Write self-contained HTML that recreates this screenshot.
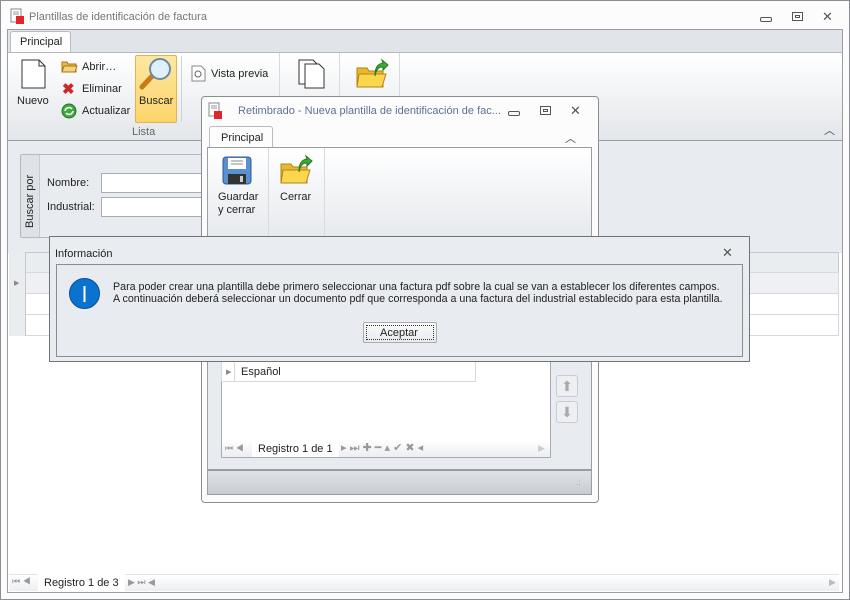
<!DOCTYPE html>
<html><head><meta charset="utf-8"><style>
*{margin:0;padding:0;box-sizing:border-box}
body{width:850px;height:600px;position:relative;overflow:hidden;background:#fff;font-family:"Liberation Sans",sans-serif;font-size:11px;color:#222}
.a{position:absolute}
.t{position:absolute;white-space:nowrap}
.btnc{position:absolute;font-size:13px;color:#555}
</style></head><body>
<!-- main window -->
<div class="a" style="left:0;top:0;width:850px;height:600px;border:1px solid #8a8e94;background:#fcfcfc"></div>
<svg class="a" style="left:10px;top:8px" width="14" height="16"><rect x="1" y="1" width="10" height="13" fill="#fff" stroke="#888"/><line x1="3" y1="4" x2="9" y2="4" stroke="#999"/><line x1="3" y1="6" x2="9" y2="6" stroke="#999"/><rect x="6" y="8" width="8" height="8" fill="#e0262a"/></svg>
<div class="t" style="left:29px;top:11px;font-size:11px;color:#777">Plantillas de identificación de factura</div>
<div class="a" style="left:760px;top:17px;width:12px;height:5px;border:1px solid #555;border-radius:2px"></div>
<div class="a" style="left:792px;top:12px;width:11px;height:9px;border:1px solid #555"></div><div class="a" style="left:795px;top:15px;width:5px;height:3px;border:1px solid #555"></div>
<div class="btnc" style="left:822px;top:9px">✕</div>
<!-- tab strip -->
<div class="a" style="left:7px;top:29px;width:836px;height:24px;background:#e1e4e8;border:1px solid #9a9ea4;border-bottom:none"></div>
<div class="a" style="left:10px;top:31px;width:61px;height:22px;background:#fdfdfd;border:1px solid #b8bcc2;border-bottom:none;border-radius:3px 3px 0 0"></div>
<div class="t" style="left:20px;top:36px;font-size:11px">Principal</div>
<!-- ribbon -->
<div class="a" style="left:7px;top:52px;width:836px;height:89px;background:linear-gradient(#fff,#e3e6ea);border:1px solid #9a9ea4;border-top:1px solid #b5b9bf"></div>
<svg class="a" style="left:21px;top:59px" width="26" height="30"><path d="M1 1h17l6 6v22H1z" fill="#fff" stroke="#333"/><path d="M18 1v6h6" fill="none" stroke="#333"/></svg>
<div class="t" style="left:17px;top:95px;font-size:11px">Nuevo</div>
<svg class="a" style="left:61px;top:60px" width="17" height="13"><path d="M1 2h5l1 2h8v8H1z" fill="#e9b84a" stroke="#a7761a"/><path d="M3 6h13l-2 6H1z" fill="#f6d37a" stroke="#a7761a"/></svg>
<div class="t" style="left:82px;top:61px;font-size:11px">Abrir…</div>
<div class="t" style="left:62px;top:80px;font-size:15px;color:#d0262a;font-weight:bold">✖</div>
<div class="t" style="left:82px;top:83px;font-size:11px">Eliminar</div>
<svg class="a" style="left:61px;top:103px" width="16" height="16"><circle cx="8" cy="8" r="7" fill="#3caa3c" stroke="#1f7a1f"/><path d="M4 8a4 4 0 0 1 7-2M12 8a4 4 0 0 1-7 2" stroke="#fff" stroke-width="1.6" fill="none"/></svg>
<div class="t" style="left:82px;top:105px;font-size:11px">Actualizar</div>
<div class="a" style="left:135px;top:55px;width:42px;height:68px;background:linear-gradient(#fde7a0,#fbd56a);border:1px solid #e0b44e;border-radius:2px"></div>
<svg class="a" style="left:137px;top:57px" width="36" height="34"><line x1="5" y1="30" x2="17" y2="17" stroke="#c77a1a" stroke-width="5" stroke-linecap="round"/><circle cx="23" cy="12" r="10" fill="#dff0fb" stroke="#6a8aa6" stroke-width="2"/></svg>
<div class="t" style="left:139px;top:95px;font-size:11px">Buscar</div>
<div class="a" style="left:181px;top:56px;width:1px;height:66px;background:#d0d3d8"></div>
<svg class="a" style="left:190px;top:65px" width="16" height="17"><path d="M2 1h9l4 4v11H2z" fill="#fff" stroke="#888"/><circle cx="8" cy="9" r="3" fill="none" stroke="#666"/></svg>
<div class="t" style="left:211px;top:68px;font-size:11px">Vista previa</div>
<div class="a" style="left:279px;top:53px;width:1px;height:45px;background:#d8dade"></div>
<div class="a" style="left:339px;top:53px;width:1px;height:45px;background:#d8dade"></div>
<div class="a" style="left:399px;top:53px;width:1px;height:45px;background:#d8dade"></div>
<svg class="a" style="left:298px;top:59px" width="28" height="30"><path d="M1 1h14l4 4v20H1z" fill="#fff" stroke="#333"/><path d="M7 5h14l5 5v19H7z" fill="#fff" stroke="#333"/></svg>
<svg class="a" style="left:355px;top:58px" width="34" height="32"><path d="M2 10h10l2 3h14v16H2z" fill="#e9b82e" stroke="#b28414"/><path d="M4 16h27l-4 13H2z" fill="#fbd74e" stroke="#b28414"/><path d="M20 18c0-8 2-12 8-13l-1-3 6 5-5 5v-3c-5 0-7 3-8 9z" fill="#3fa93a" stroke="#1e7a1e"/></svg>
<div class="t" style="left:132px;top:126px;font-size:11px;color:#666">Lista</div>
<div class="t" style="left:824px;top:122px;font-size:11px;color:#444">︿</div>
<!-- content -->
<div class="a" style="left:7px;top:141px;width:836px;height:112px;background:#e8ebef;border-left:1px solid #9a9ea4;border-right:1px solid #9a9ea4"></div>
<div class="a" style="left:20px;top:154px;width:190px;height:84px;border:1px solid #b6bac0;background:#e8ebef;border-radius:2px"></div>
<div class="a" style="left:21px;top:155px;width:19px;height:82px;background:#dfe2e6;border-right:1px solid #c8ccd2"></div>
<div class="t" style="left:24px;top:228px;font-size:11px;transform:rotate(-90deg);transform-origin:0 0">Buscar por</div>
<div class="t" style="left:47px;top:177px;font-size:11px">Nombre:</div>
<div class="t" style="left:47px;top:201px;font-size:11px">Industrial:</div>
<div class="a" style="left:101px;top:173px;width:110px;height:20px;background:#fff;border:1px solid #a8acb2"></div>
<div class="a" style="left:101px;top:197px;width:110px;height:20px;background:#fff;border:1px solid #a8acb2"></div>
<!-- grid -->
<div class="a" style="left:7px;top:253px;width:836px;height:340px;background:#fff;border:1px solid #9a9ea4;border-top:none"></div>
<div class="a" style="left:9px;top:252px;width:830px;height:21px;background:#eaedf0;border:1px solid #c5c9ce"></div>
<div class="a" style="left:9px;top:272px;width:830px;height:22px;background:#eef0f3;border:1px solid #d5d8dc"></div>
<div class="a" style="left:9px;top:293px;width:830px;height:22px;border:1px solid #d5d8dc"></div>
<div class="a" style="left:9px;top:314px;width:830px;height:22px;border:1px solid #d5d8dc"></div>
<div class="a" style="left:9px;top:252px;width:17px;height:84px;border-right:1px solid #c5c9ce;background:#eaedf0"></div>
<div class="t" style="left:14px;top:279px;font-size:7px;color:#888">▶</div>
<div class="a" style="left:9px;top:574px;width:830px;height:17px;background:linear-gradient(#fff,#eceef1);border-top:1px solid #e2e4e7"></div>
<div class="t" style="left:12px;top:576px;font-size:9px;color:#999">⏮ ◀</div>
<div class="a" style="left:38px;top:574px;width:87px;height:17px;background:#fff"></div>
<div class="t" style="left:44px;top:577px;font-size:11px">Registro 1 de 3</div>
<div class="t" style="left:128px;top:577px;font-size:9px;color:#999">▶ ⏭ ◀</div>
<div class="t" style="left:829px;top:577px;font-size:9px;color:#bbb">▶</div>
<!-- child window -->
<div class="a" style="left:201px;top:96px;width:398px;height:407px;background:#fcfcfc;border:1px solid #8a8e94;border-radius:4px"></div>
<svg class="a" style="left:208px;top:102px" width="14" height="17"><rect x="1" y="1" width="10" height="13" fill="#fff" stroke="#888"/><line x1="3" y1="4" x2="9" y2="4" stroke="#999"/><line x1="3" y1="6" x2="9" y2="6" stroke="#999"/><rect x="6" y="9" width="8" height="8" fill="#e0262a"/></svg>
<div class="t" style="left:238px;top:105px;font-size:11px;color:#5f6f96">Retimbrado - Nueva plantilla de identificación de fac...</div>
<div class="a" style="left:508px;top:111px;width:12px;height:5px;border:1px solid #555;border-radius:2px"></div>
<div class="a" style="left:540px;top:106px;width:11px;height:9px;border:1px solid #555"></div><div class="a" style="left:543px;top:109px;width:5px;height:3px;border:1px solid #555"></div>
<div class="btnc" style="left:570px;top:103px">✕</div>
<div class="a" style="left:209px;top:126px;width:64px;height:23px;background:#fdfdfd;border:1px solid #b8bcc2;border-bottom:none;border-radius:3px 3px 0 0"></div>
<div class="t" style="left:221px;top:132px;font-size:11px">Principal</div>
<div class="t" style="left:565px;top:130px;font-size:11px;color:#444">︿</div>
<div class="a" style="left:207px;top:147px;width:385px;height:323px;background:linear-gradient(#fff 0,#e6e9ed 90px,#e8ebef 90px);border:1px solid #9a9ea4"></div>
<div class="a" style="left:268px;top:148px;width:1px;height:88px;background:#d8dade"></div>
<div class="a" style="left:324px;top:148px;width:1px;height:88px;background:#d8dade"></div>
<svg class="a" style="left:222px;top:156px" width="32" height="30"><rect x="1" y="1" width="28" height="27" rx="3" fill="#5a8fd0" stroke="#2a5a96"/><rect x="6" y="2" width="18" height="11" fill="#fff"/><line x1="9" y1="5" x2="21" y2="5" stroke="#888"/><line x1="9" y1="8" x2="21" y2="8" stroke="#888"/><rect x="6" y="18" width="18" height="10" fill="#333"/><rect x="18" y="20" width="3" height="6" fill="#ccc"/></svg>
<div class="t" style="left:218px;top:191px;font-size:11px;line-height:13px">Guardar<br>y cerrar</div>
<svg class="a" style="left:279px;top:154px" width="34" height="32"><path d="M2 10h10l2 3h14v16H2z" fill="#e9b82e" stroke="#b28414"/><path d="M4 16h27l-4 13H2z" fill="#fbd74e" stroke="#b28414"/><path d="M20 18c0-8 2-12 8-13l-1-3 6 5-5 5v-3c-5 0-7 3-8 9z" fill="#3fa93a" stroke="#1e7a1e"/></svg>
<div class="t" style="left:280px;top:191px;font-size:11px">Cerrar</div>
<div class="a" style="left:221px;top:330px;width:330px;height:128px;background:#fff;border:1px solid #a8acb2"></div>
<div class="a" style="left:221px;top:362px;width:255px;height:20px;border:1px solid #d5d8dc;border-top:none"></div>
<div class="a" style="left:221px;top:362px;width:14px;height:20px;border-right:1px solid #d5d8dc"></div>
<div class="t" style="left:226px;top:368px;font-size:7px;color:#888">▶</div>
<div class="t" style="left:241px;top:366px;font-size:11px">Español</div>
<div class="a" style="left:222px;top:440px;width:328px;height:17px;background:linear-gradient(#fff,#eceef1)"></div>
<div class="t" style="left:225px;top:443px;font-size:9px;color:#999">⏮ ◀</div>
<div class="a" style="left:252px;top:440px;width:87px;height:17px;background:#fff"></div>
<div class="t" style="left:258px;top:443px;font-size:11px">Registro 1 de 1</div>
<div class="t" style="left:341px;top:441px;font-size:11px;color:#999">▸ ⏭ ✚ ━ ▴ ✔ ✖ ◂</div>
<div class="t" style="left:538px;top:443px;font-size:9px;color:#ccc">▶</div>
<div class="a" style="left:556px;top:375px;width:22px;height:22px;border:1px solid #c8ccd2;border-radius:3px;background:#edeff2;color:#aaa;font-size:14px;text-align:center;line-height:20px">⬆</div>
<div class="a" style="left:556px;top:401px;width:22px;height:22px;border:1px solid #c8ccd2;border-radius:3px;background:#edeff2;color:#aaa;font-size:14px;text-align:center;line-height:20px">⬇</div>
<div class="a" style="left:207px;top:470px;width:385px;height:25px;background:linear-gradient(#dfe2e6,#c9cdd2);border:1px solid #9a9ea4"></div>
<div class="t" style="left:576px;top:478px;font-size:8px;color:#999">.:</div>
<!-- dialog -->
<div class="a" style="left:49px;top:236px;width:701px;height:126px;background:#e9ecf0;border:1px solid #6f737a"></div>
<div class="t" style="left:55px;top:248px;font-size:11px">Información</div>
<div class="btnc" style="left:722px;top:245px">✕</div>
<div class="a" style="left:56px;top:264px;width:687px;height:93px;background:#e8ebef;border:1px solid #8a8e94"></div>
<svg class="a" style="left:68px;top:277px" width="33" height="33"><circle cx="16.5" cy="16.5" r="15" fill="#0a73d0" stroke="#0a4f9a"/><line x1="16.5" y1="9" x2="16.5" y2="25" stroke="#fff" stroke-width="2"/></svg>
<div class="t" style="left:113px;top:281px;font-size:10.7px;line-height:12px;color:#222">Para poder crear una plantilla debe primero seleccionar una factura pdf sobre la cual se van a establecer los diferentes campos.<br>A continuación deberá seleccionar un documento pdf que corresponda a una factura del industrial establecido para esta plantilla.</div>
<div class="a" style="left:363px;top:322px;width:74px;height:21px;background:linear-gradient(#fafafa,#e8eaed);border:1px solid #a8acb2;border-radius:2px"></div>
<div class="a" style="left:366px;top:325px;width:68px;height:15px;border:1px dotted #333"></div>
<div class="t" style="left:380px;top:327px;font-size:11px">Aceptar</div>
</body></html>
